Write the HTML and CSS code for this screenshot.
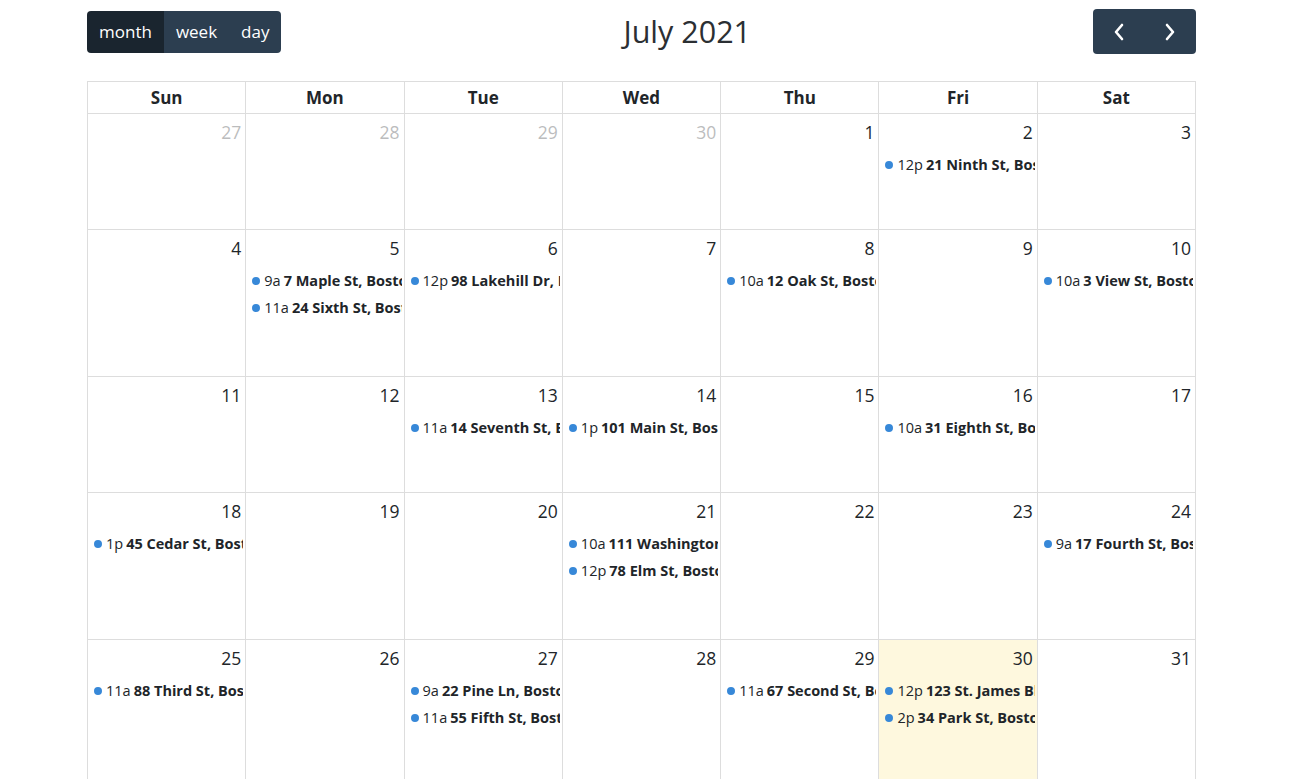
FILE: index.html
```html
<!DOCTYPE html>
<html>
<head>
<meta charset="utf-8">
<link rel="stylesheet" href="styles.css">
</head>
<body>
<div class="cal">
  <div class="toolbar">
    <div class="btn-group">
      <button class="btn active">month</button>
      <button class="btn">week</button>
      <button class="btn">day</button>
    </div>
    <h2 class="title">July 2021</h2>
    <div class="btn-group nav">
      <button class="btn icon"><svg width="14" height="18" viewBox="0 0 14 18"><path d="M10 2 L4 9 L10 16" fill="none" stroke="#fff" stroke-width="2.6" stroke-linecap="round" stroke-linejoin="round"/></svg></button>
      <button class="btn icon"><svg width="14" height="18" viewBox="0 0 14 18"><path d="M4 2 L10 9 L4 16" fill="none" stroke="#fff" stroke-width="2.6" stroke-linecap="round" stroke-linejoin="round"/></svg></button>
    </div>
  </div>
  <div class="grid">
    <div class="head">Sun</div><div class="head">Mon</div><div class="head">Tue</div><div class="head">Wed</div><div class="head">Thu</div><div class="head">Fri</div><div class="head">Sat</div>

    <div class="day other"><div class="num">27</div></div>
    <div class="day other"><div class="num">28</div></div>
    <div class="day other"><div class="num">29</div></div>
    <div class="day other"><div class="num">30</div></div>
    <div class="day"><div class="num">1</div></div>
    <div class="day"><div class="num">2</div><div class="events"><div class="ev"><span class="dot"></span><span class="time">12p</span><b>21 Ninth St, Boston, MA</b></div></div></div>
    <div class="day"><div class="num">3</div></div>

    <div class="day"><div class="num">4</div></div>
    <div class="day"><div class="num">5</div><div class="events"><div class="ev"><span class="dot"></span><span class="time">9a</span><b>7 Maple St, Boston, MA</b></div><div class="ev"><span class="dot"></span><span class="time">11a</span><b>24 Sixth St, Boston, MA</b></div></div></div>
    <div class="day"><div class="num">6</div><div class="events"><div class="ev"><span class="dot"></span><span class="time">12p</span><b>98 Lakehill Dr, Boston, MA</b></div></div></div>
    <div class="day"><div class="num">7</div></div>
    <div class="day"><div class="num">8</div><div class="events"><div class="ev"><span class="dot"></span><span class="time">10a</span><b>12 Oak St, Boston, MA</b></div></div></div>
    <div class="day"><div class="num">9</div></div>
    <div class="day"><div class="num">10</div><div class="events"><div class="ev"><span class="dot"></span><span class="time">10a</span><b>3 View St, Boston, MA</b></div></div></div>

    <div class="day"><div class="num">11</div></div>
    <div class="day"><div class="num">12</div></div>
    <div class="day"><div class="num">13</div><div class="events"><div class="ev"><span class="dot"></span><span class="time">11a</span><b>14 Seventh St, Boston, MA</b></div></div></div>
    <div class="day"><div class="num">14</div><div class="events"><div class="ev"><span class="dot"></span><span class="time">1p</span><b>101 Main St, Boston, MA</b></div></div></div>
    <div class="day"><div class="num">15</div></div>
    <div class="day"><div class="num">16</div><div class="events"><div class="ev"><span class="dot"></span><span class="time">10a</span><b>31 Eighth St, Boston, MA</b></div></div></div>
    <div class="day"><div class="num">17</div></div>

    <div class="day"><div class="num">18</div><div class="events"><div class="ev"><span class="dot"></span><span class="time">1p</span><b>45 Cedar St, Boston, MA</b></div></div></div>
    <div class="day"><div class="num">19</div></div>
    <div class="day"><div class="num">20</div></div>
    <div class="day"><div class="num">21</div><div class="events"><div class="ev"><span class="dot"></span><span class="time">10a</span><b>111 Washington St, Boston, MA</b></div><div class="ev"><span class="dot"></span><span class="time">12p</span><b>78 Elm St, Boston, MA</b></div></div></div>
    <div class="day"><div class="num">22</div></div>
    <div class="day"><div class="num">23</div></div>
    <div class="day"><div class="num">24</div><div class="events"><div class="ev"><span class="dot"></span><span class="time">9a</span><b>17 Fourth St, Boston, MA</b></div></div></div>

    <div class="day"><div class="num">25</div><div class="events"><div class="ev"><span class="dot"></span><span class="time">11a</span><b>88 Third St, Boston, MA</b></div></div></div>
    <div class="day"><div class="num">26</div></div>
    <div class="day"><div class="num">27</div><div class="events"><div class="ev"><span class="dot"></span><span class="time">9a</span><b>22 Pine Ln, Boston, MA</b></div><div class="ev"><span class="dot"></span><span class="time">11a</span><b>55 Fifth St, Boston, MA</b></div></div></div>
    <div class="day"><div class="num">28</div></div>
    <div class="day"><div class="num">29</div><div class="events"><div class="ev"><span class="dot"></span><span class="time">11a</span><b>67 Second St, Boston, MA</b></div></div></div>
    <div class="day today"><div class="num">30</div><div class="events"><div class="ev"><span class="dot"></span><span class="time">12p</span><b>123 St. James Blvd, Boston, MA</b></div><div class="ev"><span class="dot"></span><span class="time">2p</span><b>34 Park St, Boston, MA</b></div></div></div>
    <div class="day"><div class="num">31</div></div>
  </div>
</div>
</body>
</html>
```

FILE: styles.css
```css
html, body {
  margin: 0;
  padding: 0;
  background: #fff;
}
body {
  font-family: "Open Sans", "Noto Sans", sans-serif;
  font-size: 16px;
  color: #212529;
}
.cal {
  width: 1109px;
  margin: 9px 0 0 87px;
}
.toolbar {
  display: flex;
  justify-content: space-between;
  align-items: center;
  height: 45px;
  margin-bottom: 27px;
}
.title {
  margin: 0;
  font-size: 30.5px;
  font-weight: 500;
  line-height: 1.2;
  color: #2b2f33;
}
.btn-group {
  display: flex;
  border-radius: 4px;
  overflow: hidden;
}
.btn {
  font-family: inherit;
  font-size: 17px;
  color: #fff;
  background: #2c3e50;
  border: 0;
  margin: 0;
  height: 42px;
  padding: 0 12px;
  line-height: 42px;
  cursor: pointer;
}
.btn.active {
  background: #1a252f;
}
.nav .btn {
  height: 45px;
  width: 51.5px;
  padding: 0;
  display: flex;
  align-items: center;
  justify-content: center;
}
.grid {
  display: grid;
  grid-template-columns: repeat(7, 1fr);
  grid-template-rows: 32px 116px 147px 116px 147px 147px;
  border-left: 1px solid #ddd;
  border-top: 1px solid #ddd;
}
.head {
  border-right: 1px solid #ddd;
  border-bottom: 1px solid #ddd;
  text-align: center;
  font-weight: 700;
  font-size: 17px;
  line-height: 29px;
  padding: 1px 4px;
}
.day {
  border-right: 1px solid #ddd;
  border-bottom: 1px solid #ddd;
  min-width: 0;
  overflow: hidden;
}
.day.today {
  background: #fef8de;
}
.num {
  text-align: right;
  padding: 5px 4px 3px;
  line-height: 26px;
  font-size: 17.5px;
}
.other .num {
  opacity: 0.3;
}
.events {
  padding-top: 3px;
}
.ev {
  display: flex;
  align-items: center;
  white-space: nowrap;
  overflow: hidden;
  margin: 1px 2px 0;
  padding: 2px 0;
  font-size: 14.5px;
  line-height: 22px;
}
.dot {
  flex: none;
  width: 0;
  height: 0;
  border: 4px solid #3788d8;
  border-radius: 4px;
  margin: 0 4px;
}
.time {
  margin-right: 3px;
}
.ev b {
  font-weight: 700;
}
```
